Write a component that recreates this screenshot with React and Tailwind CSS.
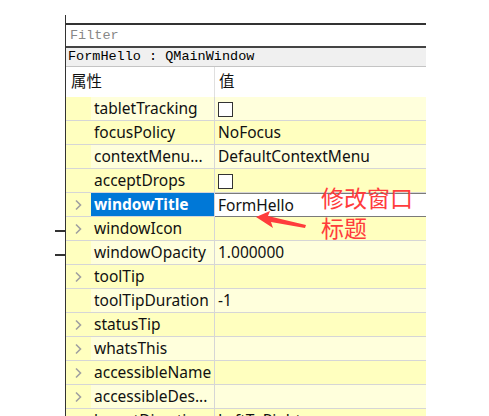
import React from "react";

const DARK = "bg-[#ffffbf]";
const LIGHT = "bg-[#ffffdc]";

const rows = [
  { name: "tabletTracking", value: "check", tone: "light" },
  { name: "focusPolicy", value: "NoFocus", tone: "dark" },
  { name: "contextMenu...", value: "DefaultContextMenu", tone: "light" },
  { name: "acceptDrops", value: "check", tone: "dark" },
  { name: "windowTitle", value: "FormHello", tone: "selected", expand: true },
  { name: "windowIcon", value: "", tone: "dark", expand: true },
  { name: "windowOpacity", value: "1.000000", tone: "light" },
  { name: "toolTip", value: "", tone: "dark", expand: true },
  { name: "toolTipDuration", value: "-1", tone: "light" },
  { name: "statusTip", value: "", tone: "dark", expand: true },
  { name: "whatsThis", value: "", tone: "light", expand: true },
  { name: "accessibleName", value: "", tone: "dark", expand: true },
  { name: "accessibleDes...", value: "", tone: "light", expand: true },
  { name: "layoutDirection", value: "LeftToRight", tone: "dark" },
];

function Chevron() {
  return (
    <svg width="9" height="12" viewBox="0 0 9 12" className="text-[#a0a0a0]">
      <path d="M2 1.5 L6.5 6 L2 10.5" fill="none" stroke="currentColor" strokeWidth="1.6" />
    </svg>
  );
}

function Row({ row }) {
  const sel = row.tone === "selected";
  const rest = row.tone === "dark" ? DARK : LIGHT;
  return (
    <div className="flex h-[24px] shrink-0 border-b border-[#d6d6d6]">
      <div className={`w-[25px] shrink-0 ${DARK} flex items-center pl-[8px]`}>
        {row.expand && <Chevron />}
      </div>
      <div
        className={`w-[124px] shrink-0 flex items-center pl-[3px] pt-px border-r border-[#d6d6d6] ${
          sel ? "bg-[#0078d7] text-white font-bold" : rest
        }`}
      >
        {row.name}
      </div>
      {sel ? (
        <div className="flex-1 flex items-center pl-[3px] pt-px bg-white border-t border-b border-[#7a7a7a] -mb-px">
          {row.value}
        </div>
      ) : (
        <div className={`flex-1 flex items-center pl-[3px] pt-px ${rest}`}>
          {row.value === "check" ? (
            <div className="w-[15px] h-[15px] border border-[#333] bg-white" />
          ) : (
            row.value
          )}
        </div>
      )}
    </div>
  );
}

export default function App() {
  return (
    <div
      className="relative w-[489px] h-[416px] bg-white overflow-hidden flex text-[15.5px] text-[#111]"
      style={{ fontFamily: '"Noto Sans", "Noto Sans CJK SC", sans-serif' }}
    >
      <div className="w-[65px] shrink-0 flex flex-col items-end pt-[230px]">
        <div className="w-[10px] h-[2px] bg-[#333]" />
        <div className="w-[10px] h-[2px] bg-[#333] mt-[22px]" />
      </div>

      <div className="w-[361px] shrink-0 mt-[15px] border-l border-[#333] flex flex-col">
        <div className="h-[8px] shrink-0" />
        <div className="h-[2px] shrink-0 bg-[#333]" />
        <div
          className="h-[21px] shrink-0 flex items-center pl-[4px] pt-px text-[13.5px] text-[#888]"
          style={{ fontFamily: '"Liberation Mono", monospace' }}
        >
          Filter
        </div>
        <div className="h-[2px] shrink-0 bg-[#444]" />
        <div
          className="h-[19px] shrink-0 flex items-center pl-[2px] bg-[#f0f0f0] text-[13.5px] text-black border-b border-[#c4c4c4]"
          style={{ fontFamily: '"Liberation Mono", monospace' }}
        >
          FormHello : QMainWindow
        </div>
        <div className="h-[30px] shrink-0 flex bg-white">
          <div className="w-[149px] shrink-0 flex items-center pl-[5px] border-r border-[#e0e0e0]">
            属性
          </div>
          <div className="flex-1 flex items-center pl-[4px]">值</div>
        </div>
        {rows.map((r) => (
          <Row key={r.name} row={r} />
        ))}
      </div>

      <div className="absolute left-[321px] top-[183px] text-[23px] leading-[30px] text-[#ff3c3c]">
        <div>修改窗口</div>
        <div>标题</div>
      </div>
      <svg className="absolute left-0 top-0" width="489" height="416">
        <polygon
          points="256,217 270,211 268,216 306,225 305,228 271,222 273,228"
          fill="#ff3c3c"
        />
      </svg>
    </div>
  );
}
